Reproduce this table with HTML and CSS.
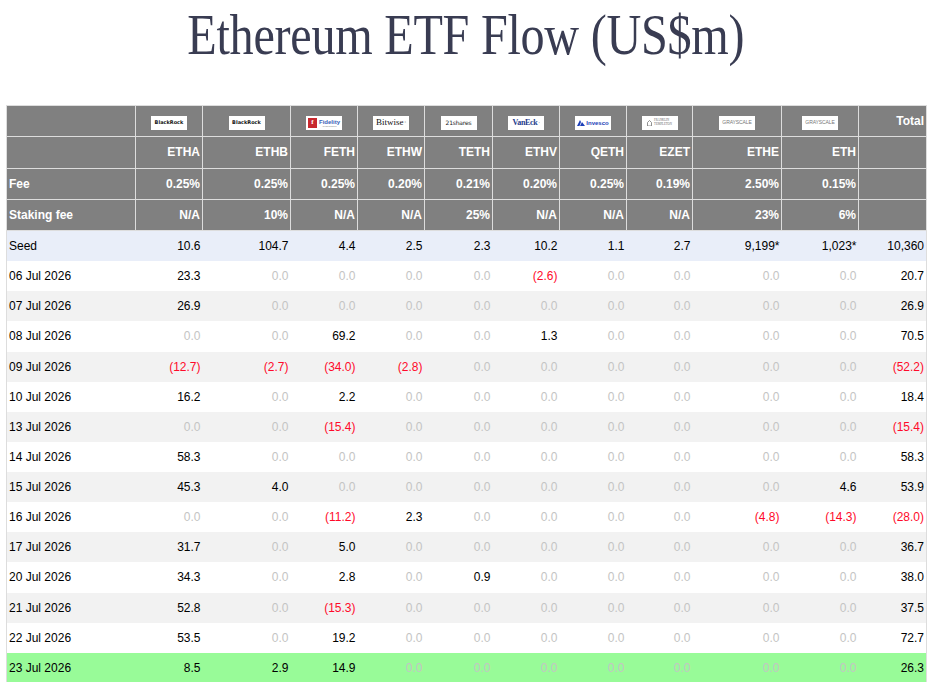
FILE: index.html
```html
<!DOCTYPE html>
<html>
<head>
<meta charset="utf-8">
<title>Ethereum ETF Flow (US$m)</title>
<link rel="stylesheet" href="styles.css">
</head>
<body>
<h1 class="title"><span>Ethereum ETF Flow (US$m)</span></h1>
<table class="flow">
  <colgroup>
    <col class="c-label"><col class="c67"><col class="c88"><col class="c67"><col class="c67"><col class="c68"><col class="c67"><col class="c67"><col class="c66"><col class="c89"><col class="c77"><col class="c68">
  </colgroup>
  <thead>
    <tr>
      <th></th>
      <th class="logo-cell"><span class="logo lg-br">BlackRock</span></th>
      <th class="logo-cell"><span class="logo lg-br">BlackRock</span></th>
      <th class="logo-cell"><span class="logo lg-fid"><span class="fid-f">f</span><span class="fid-txt">Fidelity<small>INVESTMENTS</small></span></span></th>
      <th class="logo-cell"><span class="logo lg-bw">Bitwise<sup>°</sup></span></th>
      <th class="logo-cell"><span class="logo lg-21">21shares</span></th>
      <th class="logo-cell"><span class="logo lg-ve">VanEck<sup>·</sup></span></th>
      <th class="logo-cell"><span class="logo lg-inv"><svg width="8" height="6" viewBox="0 0 8 6"><path d="M0 6 L3 0 L4 2 L2.5 6 Z M3 6 L5 2 L8 6 Z" fill="#1c3fb8"/></svg>Invesco</span></th>
      <th class="logo-cell"><span class="logo lg-ft"><svg width="5" height="6" viewBox="0 0 5 6"><path d="M0.5 6V2.5L2.5 0.5L4.5 2.5V6Z" fill="none" stroke="#777" stroke-width="0.8"/></svg><span class="ft-txt">FRANKLIN<br>TEMPLETON</span></span></th>
      <th class="logo-cell"><span class="logo lg-gs">GRAYSCALE</span></th>
      <th class="logo-cell"><span class="logo lg-gs">GRAYSCALE</span></th>
      <th>Total</th>
    </tr>
    <tr>
      <th></th><th>ETHA</th><th>ETHB</th><th>FETH</th><th>ETHW</th><th>TETH</th><th>ETHV</th><th>QETH</th><th>EZET</th><th>ETHE</th><th>ETH</th><th></th>
    </tr>
    <tr>
      <th class="lbl">Fee</th><th>0.25%</th><th>0.25%</th><th>0.25%</th><th>0.20%</th><th>0.21%</th><th>0.20%</th><th>0.25%</th><th>0.19%</th><th>2.50%</th><th>0.15%</th><th></th>
    </tr>
    <tr>
      <th class="lbl">Staking fee</th><th>N/A</th><th>10%</th><th>N/A</th><th>N/A</th><th>25%</th><th>N/A</th><th>N/A</th><th>N/A</th><th>23%</th><th>6%</th><th></th>
    </tr>
  </thead>
  <tbody>
    <tr class="seed"><td>Seed</td><td>10.6</td><td>104.7</td><td>4.4</td><td>2.5</td><td>2.3</td><td>10.2</td><td>1.1</td><td>2.7</td><td>9,199*</td><td>1,023*</td><td>10,360</td></tr>
    <tr><td>06 Jul 2026</td><td>23.3</td><td class="z">0.0</td><td class="z">0.0</td><td class="z">0.0</td><td class="z">0.0</td><td class="n">(2.6)</td><td class="z">0.0</td><td class="z">0.0</td><td class="z">0.0</td><td class="z">0.0</td><td>20.7</td></tr>
    <tr class="alt"><td>07 Jul 2026</td><td>26.9</td><td class="z">0.0</td><td class="z">0.0</td><td class="z">0.0</td><td class="z">0.0</td><td class="z">0.0</td><td class="z">0.0</td><td class="z">0.0</td><td class="z">0.0</td><td class="z">0.0</td><td>26.9</td></tr>
    <tr><td>08 Jul 2026</td><td class="z">0.0</td><td class="z">0.0</td><td>69.2</td><td class="z">0.0</td><td class="z">0.0</td><td>1.3</td><td class="z">0.0</td><td class="z">0.0</td><td class="z">0.0</td><td class="z">0.0</td><td>70.5</td></tr>
    <tr class="alt"><td>09 Jul 2026</td><td class="n">(12.7)</td><td class="n">(2.7)</td><td class="n">(34.0)</td><td class="n">(2.8)</td><td class="z">0.0</td><td class="z">0.0</td><td class="z">0.0</td><td class="z">0.0</td><td class="z">0.0</td><td class="z">0.0</td><td class="n">(52.2)</td></tr>
    <tr><td>10 Jul 2026</td><td>16.2</td><td class="z">0.0</td><td>2.2</td><td class="z">0.0</td><td class="z">0.0</td><td class="z">0.0</td><td class="z">0.0</td><td class="z">0.0</td><td class="z">0.0</td><td class="z">0.0</td><td>18.4</td></tr>
    <tr class="alt"><td>13 Jul 2026</td><td class="z">0.0</td><td class="z">0.0</td><td class="n">(15.4)</td><td class="z">0.0</td><td class="z">0.0</td><td class="z">0.0</td><td class="z">0.0</td><td class="z">0.0</td><td class="z">0.0</td><td class="z">0.0</td><td class="n">(15.4)</td></tr>
    <tr><td>14 Jul 2026</td><td>58.3</td><td class="z">0.0</td><td class="z">0.0</td><td class="z">0.0</td><td class="z">0.0</td><td class="z">0.0</td><td class="z">0.0</td><td class="z">0.0</td><td class="z">0.0</td><td class="z">0.0</td><td>58.3</td></tr>
    <tr class="alt"><td>15 Jul 2026</td><td>45.3</td><td>4.0</td><td class="z">0.0</td><td class="z">0.0</td><td class="z">0.0</td><td class="z">0.0</td><td class="z">0.0</td><td class="z">0.0</td><td class="z">0.0</td><td>4.6</td><td>53.9</td></tr>
    <tr><td>16 Jul 2026</td><td class="z">0.0</td><td class="z">0.0</td><td class="n">(11.2)</td><td>2.3</td><td class="z">0.0</td><td class="z">0.0</td><td class="z">0.0</td><td class="z">0.0</td><td class="n">(4.8)</td><td class="n">(14.3)</td><td class="n">(28.0)</td></tr>
    <tr class="alt"><td>17 Jul 2026</td><td>31.7</td><td class="z">0.0</td><td>5.0</td><td class="z">0.0</td><td class="z">0.0</td><td class="z">0.0</td><td class="z">0.0</td><td class="z">0.0</td><td class="z">0.0</td><td class="z">0.0</td><td>36.7</td></tr>
    <tr><td>20 Jul 2026</td><td>34.3</td><td class="z">0.0</td><td>2.8</td><td class="z">0.0</td><td>0.9</td><td class="z">0.0</td><td class="z">0.0</td><td class="z">0.0</td><td class="z">0.0</td><td class="z">0.0</td><td>38.0</td></tr>
    <tr class="alt"><td>21 Jul 2026</td><td>52.8</td><td class="z">0.0</td><td class="n">(15.3)</td><td class="z">0.0</td><td class="z">0.0</td><td class="z">0.0</td><td class="z">0.0</td><td class="z">0.0</td><td class="z">0.0</td><td class="z">0.0</td><td>37.5</td></tr>
    <tr><td>22 Jul 2026</td><td>53.5</td><td class="z">0.0</td><td>19.2</td><td class="z">0.0</td><td class="z">0.0</td><td class="z">0.0</td><td class="z">0.0</td><td class="z">0.0</td><td class="z">0.0</td><td class="z">0.0</td><td>72.7</td></tr>
    <tr class="today"><td>23 Jul 2026</td><td>8.5</td><td>2.9</td><td>14.9</td><td class="z">0.0</td><td class="z">0.0</td><td class="z">0.0</td><td class="z">0.0</td><td class="z">0.0</td><td class="z">0.0</td><td class="z">0.0</td><td>26.3</td></tr>
  </tbody>
</table>
</body>
</html>
```
FILE: styles.css
```css
html, body {
  margin: 0;
  padding: 0;
  background: #fff;
}
body {
  font-family: "Liberation Sans", Arial, sans-serif;
  font-size: 12px;
  color: #000;
}
.title {
  margin: 3px 0 0;
  text-align: center;
  font-family: "Liberation Serif", "Times New Roman", serif;
  font-weight: 400;
  font-size: 56px;
  line-height: 64px;
  color: #393c52;
}
.title span {
  display: inline-block;
  transform: scaleX(0.86);
  letter-spacing: -0.3px;
}
.flow {
  margin: 38px 6px 0;
  width: 920px;
  table-layout: fixed;
  border-collapse: collapse;
  border-left: 1px solid #ddd;
  border-right: 1px solid #ddd;
}
.c-label { width: 129px; }
.c66 { width: 66px; }
.c67 { width: 67px; }
.c68 { width: 68px; }
.c77 { width: 77px; }
.c88 { width: 88px; }
.c89 { width: 89px; }

.flow th {
  background: #808080;
  color: #fff;
  font-weight: bold;
  font-size: 12px;
  text-align: right;
  padding: 0 2px;
  height: 30.25px;
  border: 1px solid #ddd;
  white-space: nowrap;
}
.flow th.lbl {
  text-align: left;
}
.flow th.logo-cell {
  text-align: center;
  padding: 0;
}
.flow td {
  height: 30.14px;
  padding: 0 2px;
  text-align: right;
  white-space: nowrap;
}
.flow td:first-child {
  text-align: left;
}
.seed td { background: #e9eef9; }
.alt td { background: #f2f2f2; }
.today td { background: #98fb98; }
.flow td.z { color: #c4c4c4; }
.flow td.n { color: #ff0a2a; }

/* logos */
.logo {
  display: inline-flex;
  align-items: center;
  justify-content: center;
  gap: 1px;
  width: 36px;
  height: 14px;
  background: #fff;
  vertical-align: middle;
  margin-top: 3px;
  overflow: hidden;
  white-space: nowrap;
  font-weight: normal;
  line-height: 1;
}
.lg-br {
  font-family: "DejaVu Sans", sans-serif;
  font-weight: bold;
  font-size: 5px;
  color: #111;
}
.lg-fid {
  justify-content: flex-start;
  padding-left: 2px;
  box-sizing: border-box;
  gap: 2px;
}
.fid-f {
  display: inline-flex;
  align-items: center;
  justify-content: center;
  width: 9px;
  height: 10px;
  background: #c8282e;
  color: #fff;
  font-family: "Liberation Serif", serif;
  font-weight: bold;
  font-size: 7px;
}
.fid-txt {
  display: flex;
  flex-direction: column;
  font-family: "Liberation Sans", sans-serif;
  font-weight: bold;
  font-size: 6px;
  color: #3a5fb8;
}
.fid-txt small {
  font-size: 2px;
  color: #888;
  font-weight: normal;
}
.lg-bw {
  font-family: "Liberation Serif", serif;
  font-size: 9px;
  color: #111;
}
.lg-bw sup, .lg-ve sup {
  font-size: 4px;
}
.lg-21 {
  font-family: "DejaVu Sans", sans-serif;
  font-size: 6px;
  color: #222;
  letter-spacing: -0.2px;
}
.lg-ve {
  font-family: "Liberation Serif", serif;
  font-weight: bold;
  font-size: 8px;
  color: #1e3c8c;
  letter-spacing: -0.3px;
}
.lg-inv {
  font-family: "Liberation Sans", sans-serif;
  font-weight: bold;
  font-size: 6px;
  color: #1c3fb8;
}
.lg-ft {
  gap: 2px;
}
.ft-txt {
  font-family: "Liberation Serif", serif;
  font-size: 3px;
  color: #666;
  text-align: left;
  line-height: 1.1;
}
.lg-gs {
  font-family: "Liberation Sans", sans-serif;
  font-size: 5px;
  color: #777;
  letter-spacing: -0.1px;
}
```
